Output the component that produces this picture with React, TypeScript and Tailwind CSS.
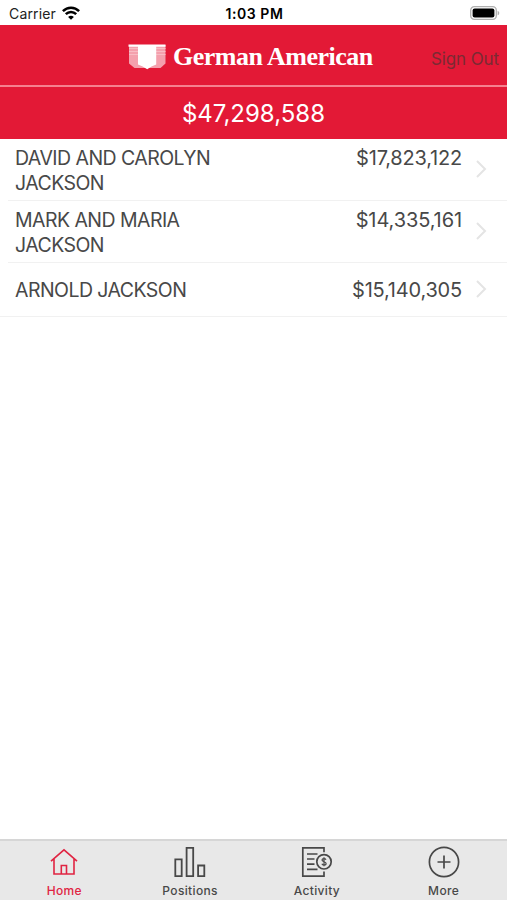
// react
import React from 'react'

interface Household {
    name: string
    balance: string
    balanceClass: string
}

interface Tab {
    label: string
    icon: React.ReactNode
    active?: boolean
}

const households: Household[] = [
    { name: 'DAVID AND CAROLYN JACKSON', balance: '$17,823,122', balanceClass: 'tracking-[-0.2px]' },
    { name: 'MARK AND MARIA JACKSON', balance: '$14,335,161', balanceClass: 'tracking-[-0.1px]' },
    { name: 'ARNOLD JACKSON', balance: '$15,140,305', balanceClass: 'tracking-[-0.2px]' },
]

const HomeIcon = () => (
    <svg width="28" height="28" viewBox="0 0 28 28" fill="none" stroke="currentColor" strokeWidth="1.6">
        <path d="M1 13.2 14 1.8l13 11.4M4 11v15h20V11M11.3 26v-8.5h5.2V26" />
    </svg>
)

const PositionsIcon = () => (
    <svg width="32" height="32" viewBox="0 0 32 32" fill="none" stroke="currentColor" strokeWidth="1.8">
        <path d="M1.3 13.3h6.4v16.9H1.3zM12.6 1.8h6.6v28.4h-6.6zM24.1 19.5h6.2v10.7h-6.2z" />
    </svg>
)

const ActivityIcon = () => (
    <svg width="32" height="32" viewBox="0 0 32 32" fill="none" stroke="currentColor" strokeWidth="1.7">
        <path d="M23 6.2V1.8H1.8v28.4H23v-4.8M6 8h10.5M6 13h7.5M6 18.2h7.5M6 23.3h10.5" />
        <circle cx="23" cy="15.8" r="7.2" />
        <path d="M25 13.7c-.4-.8-1.1-1.1-2-1.1-1.2 0-2 .6-2 1.5 0 2.2 4.1 1.1 4.1 3.4 0 1-.9 1.6-2.1 1.6-1 0-1.8-.4-2.1-1.3M23 11.3v9" strokeWidth="1.2" />
    </svg>
)

const MoreIcon = () => (
    <svg width="32" height="32" viewBox="0 0 32 32" fill="none" stroke="currentColor" strokeWidth="1.7">
        <circle cx="16" cy="16" r="14.6" />
        <path d="M16 9.5v13M9.5 16h13" />
    </svg>
)

const tabs: Tab[] = [
    { label: 'Home', icon: <HomeIcon />, active: true },
    { label: 'Positions', icon: <PositionsIcon /> },
    { label: 'Activity', icon: <ActivityIcon /> },
    { label: 'More', icon: <MoreIcon /> },
]

const StatusBar = () => (
    <div className="grid h-[25px] shrink-0 grid-cols-3 items-center pl-[9px] pr-[7px] text-black">
        <div className="flex items-center gap-[6px]">
            <span className="pt-[2px] text-[14px] leading-5 tracking-[0.15px] text-[#222]">Carrier</span>
            <svg width="18" height="14" viewBox="0 0 18 14" fill="none" stroke="currentColor" strokeWidth="2.5">
                <path d="M.9 5.2c4.6-4.7 11.6-4.7 16.2 0M3.8 8.2c3-3 7.4-3 10.4 0" />
                <path d="M9 13.8 6.1 10.9c1.7-1.5 4.1-1.5 5.8 0z" fill="currentColor" stroke="none" />
            </svg>
        </div>
        <span className="pt-[2px] text-center text-[14px] font-semibold leading-5 tracking-[0.55px]">1:03 PM</span>
        <svg className="justify-self-end" width="30" height="14" viewBox="0 0 30 14">
            <rect x=".7" y=".7" width="25.6" height="12.6" rx="3.6" fill="#fff" stroke="#b0b0b0" strokeWidth="1.3" />
            <rect x="2.6" y="2.5" width="21.8" height="9" rx="2" fill="#000" />
            <path d="M27.6 4.7c2.2.9 2.2 3.7 0 4.6z" fill="#b0b0b0" />
        </svg>
    </div>
)

const Logo = () => (
    <div className="flex items-center pt-[3px]">
        <svg width="38" height="26" viewBox="0 0 38 26">
            <path d="M1 1h36.5v18.5l-5 4.5H6.5L1 19.5z" fill="#f4a0ad" />
            <path d="M1 4.5h9M1 7.5h9M1 10.5h9M28 4.5h9.5M28 7.5h9.5M28 10.5h9.5" stroke="#f8bcc5" strokeWidth="1" />
            <path d="M.5.5h37v2.2h-9.3v17.8l-4.7 2-4.3 2.7-4.5-2.7-4.7-2V2.7H.5z" fill="#fff" />
        </svg>
        <span className="ml-[7px] whitespace-nowrap font-['Liberation_Serif',serif] text-[26px] font-bold leading-[30px] tracking-[-0.5px]">German American</span>
    </div>
)

const App = () => {
    return (
        <div className="flex h-[900px] w-full flex-col overflow-hidden bg-white font-['Inter',sans-serif] text-[#484848]">
            <StatusBar />

            <header className="flex h-[60px] shrink-0 items-center justify-between bg-[#e31936] pl-[128px] pr-[8px] text-white">
                <Logo />
                <span className="whitespace-nowrap pt-[8px] text-[17px] leading-5 tracking-[-0.1px] text-[#7b2a33]">Sign Out</span>
            </header>
            <div className="h-[2px] shrink-0 bg-[#f5818f]" />
            <div className="h-[52px] shrink-0 bg-[#e31936] text-center text-[24px] leading-[53px] text-white">$47,298,588</div>

            <main className="flex-1">
                {households.map((item, index) => {
                    const last = index === households.length - 1
                    return (
                        <div key={item.name} className={last ? 'border-b border-[#f1f1f1]' : 'ml-[8px] border-b border-[#f1f1f1]'}>
                            <div className={`flex pr-[19px] leading-[24.5px] ${last ? 'h-[53px] pl-[15px] pt-[15px]' : 'h-[61px] pl-[7px] pt-[7px]'}`}>
                                <span className="w-[205px] text-[19.5px] tracking-[-0.55px]">{item.name}</span>
                                <span className={`ml-auto text-[20px] ${item.balanceClass}`}>{item.balance}</span>
                                <svg className={last ? 'ml-[13px] mt-[2px]' : 'ml-[13px] mt-[14px]'} width="13" height="18" viewBox="0 0 13 18" fill="none" stroke="#e4e4e4" strokeWidth="2">
                                    <path d="m2 1 8 8-8 8" />
                                </svg>
                            </div>
                        </div>
                    )
                })}
            </main>

            <nav className="grid h-[61px] shrink-0 grid-cols-4 border-t-2 border-[#d6d6d6] bg-[#e8e8e8]">
                {tabs.map((tab) => (
                    <div key={tab.label} className={`flex flex-col items-center ${tab.active ? 'pl-[2px] text-[#e02442]' : 'text-[#484848]'}`}>
                        <div className="mt-[4px] flex h-[34px] items-center justify-center">{tab.icon}</div>
                        <span className="mt-[4px] text-[12px] font-medium leading-4 tracking-[0.35px]">{tab.label}</span>
                    </div>
                ))}
            </nav>
        </div>
    )
}

export default App
